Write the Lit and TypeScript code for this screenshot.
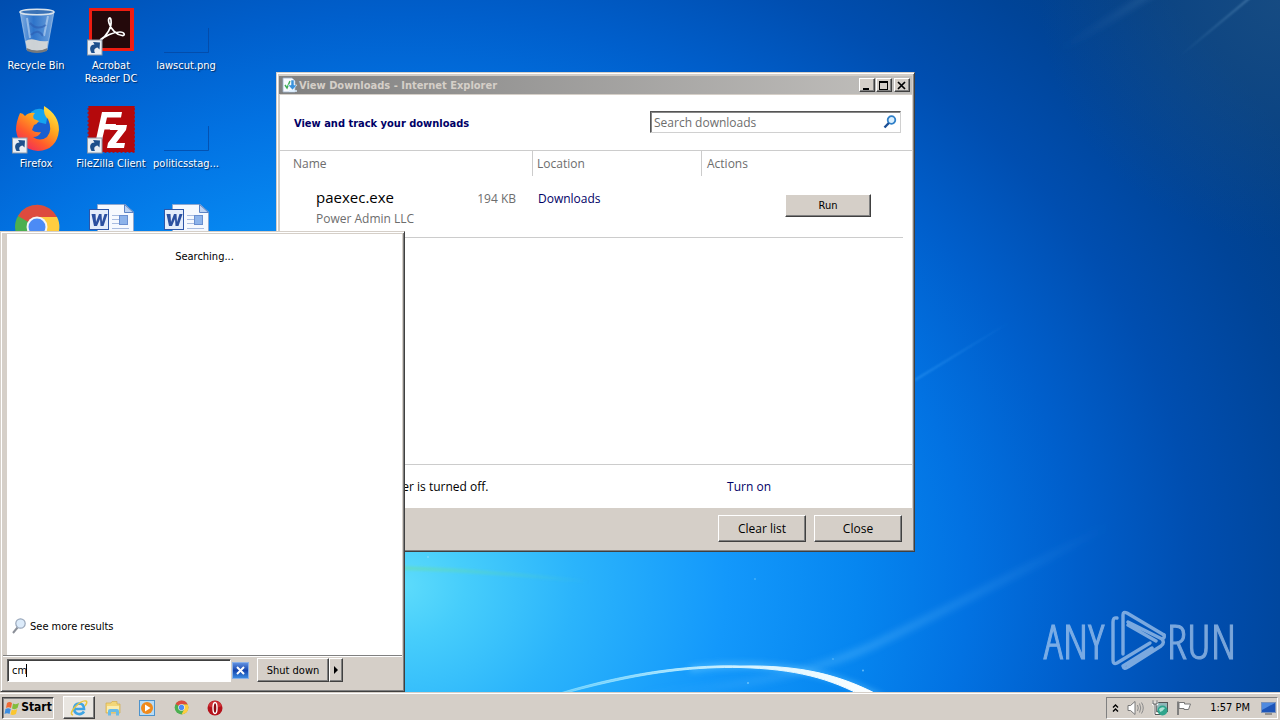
import { LitElement, html, css, svg } from "lit";
import { customElement, state } from "lit/decorators.js";

const shortcutArrow = svg`
  <g>
    <rect x="0.500" y="32" width="14.500" height="15" fill="#e9eef4" stroke="#8d9aab" stroke-width="1"/>
    <path d="M4.500 45 C1.500 39.500 4 36.500 7.500 36.500 L6 34 L13 34.500 L12.500 41.500 L10.500 39.500 C7.500 40 6.500 42 8 45 Z" fill="#1c4f8c"/>
  </g>`;

const wallpaper = html`
  <svg class="wallpaper" viewBox="0 0 1280 720" preserveAspectRatio="none" aria-hidden="true">
    <defs>
      <radialGradient id="sky" gradientUnits="userSpaceOnUse" cx="0" cy="0" r="1" gradientTransform="translate(400 585) scale(1090 920)">
        <stop offset="0" stop-color="#5edcfb"/>
        <stop offset="0.06" stop-color="#46cdfb"/>
        <stop offset="0.16" stop-color="#2bb4fb"/>
        <stop offset="0.3" stop-color="#1398fb"/>
        <stop offset="0.42" stop-color="#0686f0"/>
        <stop offset="0.52" stop-color="#0272e2"/>
        <stop offset="0.62" stop-color="#005fcc"/>
        <stop offset="0.73" stop-color="#004eb0"/>
        <stop offset="0.84" stop-color="#004498"/>
        <stop offset="0.95" stop-color="#023e84"/>
      </radialGradient>
      <radialGradient id="corner" gradientUnits="userSpaceOnUse" cx="1280" cy="0" r="240">
        <stop offset="0" stop-color="#2a5880" stop-opacity="0.5"/>
        <stop offset="1" stop-color="#2a5880" stop-opacity="0"/>
      </radialGradient>
      <linearGradient id="arc" x1="560" x2="880" y1="0" y2="0" gradientUnits="userSpaceOnUse">
        <stop offset="0" stop-color="#8fe2ff" stop-opacity="0.6"/>
        <stop offset="0.6" stop-color="#d8f4ff"/>
        <stop offset="1" stop-color="#ffffff"/>
      </linearGradient>
      <linearGradient id="ray" x1="640" x2="1110" y1="0" y2="0" gradientUnits="userSpaceOnUse">
        <stop offset="0" stop-color="#6cc4ff" stop-opacity="0"/>
        <stop offset="0.45" stop-color="#6cc4ff" stop-opacity="0.32"/>
        <stop offset="1" stop-color="#6cc4ff" stop-opacity="0"/>
      </linearGradient>
      <linearGradient id="glint" x1="915" x2="1010" y1="0" y2="0" gradientUnits="userSpaceOnUse">
        <stop offset="0" stop-color="#4cb0ff" stop-opacity="0.45"/>
        <stop offset="1" stop-color="#4cb0ff" stop-opacity="0"/>
      </linearGradient>
      <linearGradient id="streak" x1="1180" x2="1248" y1="0" y2="0" gradientUnits="userSpaceOnUse">
        <stop offset="0" stop-color="#6ea2cc" stop-opacity="0"/>
        <stop offset="1" stop-color="#6ea2cc" stop-opacity="0.6"/>
      </linearGradient>
      <linearGradient id="haze" x1="1060" x2="1170" y1="0" y2="0" gradientUnits="userSpaceOnUse">
        <stop offset="0" stop-color="#5a93c4" stop-opacity="0"/>
        <stop offset="1" stop-color="#5a93c4" stop-opacity="0.3"/>
      </linearGradient>
      <linearGradient id="green" x1="400" x2="590" y1="0" y2="0" gradientUnits="userSpaceOnUse">
        <stop offset="0" stop-color="#6ee08a" stop-opacity="0.4"/>
        <stop offset="1" stop-color="#6ee08a" stop-opacity="0"/>
      </linearGradient>
      <filter id="soft" filterUnits="userSpaceOnUse" x="0" y="-60" width="1280" height="840"><feGaussianBlur stdDeviation="3"/></filter>
      <filter id="fine" filterUnits="userSpaceOnUse" x="0" y="-60" width="1280" height="840"><feGaussianBlur stdDeviation="0.8"/></filter>
    </defs>
    <rect width="1280" height="720" fill="url(#sky)"/>
    <rect width="1280" height="720" fill="url(#corner)"/>
    <path d="M640 694 Q790 686 880 642 T1110 525" fill="none" stroke="url(#ray)" stroke-width="8" filter="url(#soft)"/>
    <path d="M915 380 L1010 322" stroke="url(#glint)" stroke-width="1.500" filter="url(#fine)"/>
    <path d="M1180 56 L1252 -4" stroke="url(#streak)" stroke-width="1.500" filter="url(#fine)"/>
    <path d="M1060 50 L1160 -12" stroke="url(#haze)" stroke-width="6" filter="url(#soft)"/>
    <path d="M400 568 Q480 570 590 582" fill="none" stroke="url(#green)" stroke-width="4" filter="url(#fine)"/>
    <path d="M690 669 Q800 655 882 698" fill="none" stroke="#7cd4ff" stroke-opacity="0.55" stroke-width="5" filter="url(#soft)"/>
    <path d="M560 693 C640 669 700 665 740 666 C800 665 840 674 884 698 L866 698 C830 678 795 669 740 667.500 C700 667 650 670 566 693 Z" fill="url(#arc)" stroke="url(#arc)" stroke-width="1"/>
    <g fill="#9fe0ff" fill-opacity="0.6"><circle cx="863" cy="670.500" r="1"/><circle cx="748" cy="683" r="1"/><circle cx="833" cy="659" r="0.8"/><circle cx="428" cy="557" r="0.9"/><circle cx="755" cy="579" r="0.8"/></g>
  </svg>`;

const recycleIcon = html`
  <svg class="glyph" viewBox="0 0 48 48" aria-hidden="true">
    <defs>
      <linearGradient id="binGlass" x1="0" x2="1"><stop offset="0" stop-color="#bcd8f6" stop-opacity="0.7"/><stop offset="0.4" stop-color="#5d96dc" stop-opacity="0.5"/><stop offset="1" stop-color="#c4dcf4" stop-opacity="0.6"/></linearGradient>
    </defs>
    <path d="M8 4 L42 4 L35 42 Q25 46 15 42 Z" fill="url(#binGlass)" stroke="#b4cfec" stroke-opacity="0.6"/>
    <path d="M13.500 33 Q18 30 24 32 T36 33 L35 41 Q25 45 15 41 Z" fill="#dedcd6" fill-opacity="0.9"/>
    <path d="M14.500 40 Q25 45 35.500 40 L35 43 Q25 47 15 43 Z" fill="#77797b"/>
    <path d="M15 10 L18 30 M36 8 L32 28" stroke="#e8f4ff" stroke-opacity="0.45" stroke-width="2" fill="none"/>
    <path d="M18 15 Q25 23 34 17 M19 27 Q26 20 31 28" stroke="#2c5cb0" stroke-opacity="0.6" stroke-width="2" fill="none"/>
    <ellipse cx="25" cy="4" rx="17" ry="2.800" fill="#3a72b6" stroke="#d9e3ec" stroke-width="1.600"/>
  </svg>`;

const acrobatIcon = html`
  <svg class="glyph" viewBox="0 0 48 48" aria-hidden="true">
    <rect x="2" y="0" width="45" height="43" fill="#ef1c11"/>
    <rect x="5" y="3" width="38" height="37" fill="#24090b"/>
    <path d="M13 32 C20 28 25 19 24 12 C23.500 8 20.500 10 22 15 C24 22 30 27 35 27.500 C38.500 28 38 24 33 24 C26 24 18 28 14 32" fill="none" stroke="#fff" stroke-width="1.700"/>
    ${shortcutArrow}
  </svg>`;

const firefoxIcon = html`
  <svg class="glyph" viewBox="0 0 48 48" aria-hidden="true">
    <defs>
      <linearGradient id="ffFox" x1="0.9" y1="0" x2="0.2" y2="1"><stop offset="0" stop-color="#fff24a"/><stop offset="0.4" stop-color="#ffa51f"/><stop offset="0.7" stop-color="#ff5b2c"/><stop offset="1" stop-color="#ef2464"/></linearGradient>
    </defs>
    <circle cx="27" cy="20" r="15" fill="#1a5fd0"/>
    <path d="M19 6 Q28 -1 36 7 L34 18 L21 15 Z" fill="#14a4f0"/>
    <path d="M8 7 Q11 7 13 10 Q17 6 23 7 Q20 10 22 13 L27 15 Q25 18 22 19 L20 24 Q23 27 29 26 Q27 31 21 31 Q28 36 35 31 Q41 24 36 13 Q31 9 32 0 Q47 9 47 24 Q45 44 26 45 Q6 43 4 24 Q4 16 8 7 Z" fill="url(#ffFox)"/>
    ${shortcutArrow}
  </svg>`;

const filezillaIcon = html`
  <svg class="glyph" viewBox="0 0 48 48" aria-hidden="true">
    <rect x="1.500" y="0" width="46" height="46" fill="#b4090c" stroke="#b4090c" stroke-opacity="0.8" stroke-width="2" stroke-dasharray="2 2"/>
    <path d="M15 6 H35 L34 11.500 H20 L18.500 18 H29 L28 23.500 H17.500 L14 38 H8 Z" fill="#fff"/>
    <path d="M24 19 H40 L39 24 L29 37 H38 L37 42 H20 L21 37 L31 24 H23 Z" fill="#fff"/>
    ${shortcutArrow}
  </svg>`;

const chromeShape = svg`
  <circle cx="24" cy="24" r="22" fill="#4caf50"/>
  <path d="M24 24 L5 13 A22 22 0 0 1 44 14 L24 14 Z" fill="#dd4b3e"/>
  <path d="M24 14 L44 14 A22 22 0 0 1 24 46 L33 29 Z" fill="#ffcd40"/>
  <circle cx="24" cy="24" r="10.500" fill="#f4f6f8"/>
  <circle cx="24" cy="24" r="8.500" fill="#4c8bf5"/>`;

const chromeIcon = html`<svg class="glyph" viewBox="-1 1 48 48" aria-hidden="true">${chromeShape}</svg>`;

const wordIcon = html`
  <svg class="glyph" viewBox="0 0 48 48" aria-hidden="true">
    <path d="M10.500 0.500 H38 L46.500 8 V48 H10.500 Z" fill="#f6f9fe" stroke="#8fa8cf"/>
    <path d="M37.500 0.500 V8.500 H46.500 Z" fill="#bcd2f2" stroke="#5d83c4"/>
    <path d="M25 11.500 H32 M25 15.500 H32 M25 19.500 H32 M25 24.500 H42 M12 27.500 H44" stroke="#a9bce0"/>
    <rect x="32.500" y="11.500" width="8" height="9" fill="#8db3ea" stroke="#6a8fd0"/>
    <rect x="2.500" y="5.500" width="19" height="20" fill="#e4edfb" stroke="#2d56a8"/>
    <path d="M4.500 10 H8.500 L9 18 L12 10 H14.500 L15 18 L17.500 10 H20.500 L16.500 22 H13.500 L13 15 L10 22 H7 Z" fill="#2b50a0"/>
  </svg>`;

const imageIcon = html`
  <svg class="glyph" viewBox="0 0 48 48" aria-hidden="true">
    <path d="M2 44.500 H46.500 V20" fill="none" stroke="#04449c" stroke-opacity="0.7"/>
  </svg>`;

const lensIcon = html`
  <svg class="lens" viewBox="0 0 14 14" aria-hidden="true">
    <circle cx="8.500" cy="5" r="3.800" fill="#d9efff" stroke="#2f7fc8" stroke-width="1.800"/>
    <path d="M5.800 8 L1.500 12.500" stroke="#1b4f95" stroke-width="2.400"/>
  </svg>`;

@customElement("app-root")
export class AppRoot extends LitElement {
  @state() private query = "cm";

  private shortcuts = [
    { name: "Recycle Bin", icon: recycleIcon },
    { name: "Firefox", icon: firefoxIcon },
    { name: "", icon: chromeIcon },
    { name: "Acrobat Reader DC", icon: acrobatIcon },
    { name: "FileZilla Client", icon: filezillaIcon },
    { name: "", icon: wordIcon },
    { name: "lawscut.png", icon: imageIcon },
    { name: "politicsstag...", icon: imageIcon },
    { name: "", icon: wordIcon },
  ];

  static styles = css`
    :host {
      display: grid;
      grid-template-rows: minmax(0, 1fr) auto;
      position: relative;
      isolation: isolate;
      height: 100vh;
      overflow: hidden;
      background: #0468d4;
      color: #000;
      font-family: "DejaVu Sans Condensed", "DejaVu Sans", sans-serif;
      font-size: 11px;
      line-height: 13px;
      --face: #d5cfc8;
      --navy: #000066;
    }
    * { box-sizing: border-box; }
    button, input { font: inherit; color: inherit; margin: 0; border-radius: 0; }
    button {
      display: inline-flex;
      align-items: center;
      justify-content: center;
      padding: 0;
      background: var(--face);
      border: 1px solid;
      border-color: #fff #404040 #404040 #fff;
      box-shadow: inset -1px -1px 0 #808080;
    }
    a { text-decoration: none; color: inherit; }
    svg { display: block; flex: none; }
    .wallpaper { position: absolute; inset: 0; width: 100%; height: 100%; z-index: -1; }
    .desktop { position: relative; }
    .shortcuts {
      display: grid;
      grid-auto-flow: column;
      grid-template-rows: repeat(3, 98px);
      grid-auto-columns: 72px;
      column-gap: 3px;
      padding-top: 8px;
      width: max-content;
    }
    .shortcut {
      display: flex;
      flex-direction: column;
      align-items: center;
      gap: 3px;
      color: #fff;
      text-align: center;
      text-shadow: 1px 1px 1px #012a60;
    }
    .glyph { width: 48px; height: 48px; }

    .window {
      position: absolute;
      left: 276px;
      top: 72px;
      width: 639px;
      height: 480px;
      display: flex;
      flex-direction: column;
      padding: 2px;
      background: var(--face);
      border: 1px solid;
      border-color: var(--face) #404040 #404040 var(--face);
      box-shadow: inset 1px 1px 0 #fff, inset -1px -1px 0 #808080;
    }
    .titlebar {
      display: flex;
      align-items: center;
      gap: 1px;
      height: 20px;
      padding: 0 2px 0 3px;
      border: 1px solid var(--face);
      border-width: 1px 0;
      background: linear-gradient(90deg, #808080, #c2c0bd);
      color: var(--face);
      font-weight: bold;
    }
    .titlebar h1 { flex: 1; margin: 0; font: inherit; }
    .caption { width: 16px; height: 14px; }
    .caption svg { width: 12px; height: 11px; }
    .caption.close { margin-left: 1px; }
    .content { flex: 1; display: flex; flex-direction: column; margin-left: 1px; background: #fff; font-family: "Open Sans", "Noto Sans", sans-serif; font-size: 12px; line-height: 16px; color: #6d6d6d; }
    .heading { display: flex; align-items: center; justify-content: space-between; height: 56px; padding: 0 11px 0 14px; border-bottom: 1px solid #ccc; }
    .heading h2 { margin: 0; padding-top: 2px; color: var(--navy); font: bold 11px/13px "DejaVu Sans Condensed", "DejaVu Sans", sans-serif; }
    .find { display: flex; align-items: center; width: 251px; height: 22px; margin-bottom: 2px; padding: 0 3px 0 2px; border: 1px solid; border-color: #555 #d0d0d0 #d0d0d0 #555; box-shadow: inset 1px 1px 0 #888; }
    .find input { flex: 1; min-width: 0; padding: 2px 1px 0; border: 0; outline: 0; background: none; }
    .find input::placeholder { color: #6d6d6d; opacity: 1; }
    .lens { width: 14px; height: 14px; }
    table { width: 100%; border-collapse: separate; border-spacing: 0; table-layout: fixed; }
    th { height: 25px; padding: 0 4px; text-align: left; font-weight: normal; border-right: 1px solid #ccc; }
    th:first-child { padding-left: 13px; width: 253px; }
    th:nth-child(2) { width: 169px; }
    th:last-child { border: 0; padding-left: 5px; }
    td { height: 61px; padding: 13px 5px 0; vertical-align: top; }
    td:first-child { padding: 11px 17px 0 36px; }
    .file { display: flex; justify-content: space-between; align-items: baseline; height: 24px; }
    .file strong { font-size: 15px; line-height: 20px; font-weight: normal; color: #000; }
    .link { color: var(--navy); }
    .place { display: block; line-height: 20px; }
    td.action { text-align: right; padding: 18px 41px 0; }
    .run { width: 86px; height: 23px; font-family: "DejaVu Sans Condensed", "DejaVu Sans", sans-serif; font-size: 11px; color: #000; }
    .rule { height: 1px; margin: 0 9px; background: #ccc; }
    .space { flex: 1; }
    .filter { display: flex; align-items: center; justify-content: space-between; height: 44px; padding: 0 141px 0 31px; border-top: 1px solid #ccc; color: #000; }
    .footer { display: flex; justify-content: flex-end; gap: 8px; padding: 7px 10px 7px; font-family: "Open Sans", "Noto Sans", sans-serif; font-size: 12px; }
    .footer button { width: 88px; height: 27px; }

    .startmenu {
      position: absolute;
      left: 0;
      bottom: 0;
      width: 405px;
      height: 461px;
      display: flex;
      flex-direction: column;
      padding: 2px;
      background: var(--face);
      border: 1px solid;
      border-color: var(--face) #404040 #404040 var(--face);
      box-shadow: inset 1px 1px 0 #fff, inset -1px -1px 0 #808080;
    }
    .results { flex: 1; display: flex; flex-direction: column; justify-content: space-between; margin-left: 4px; padding: 16px 5px 21px; background: #fff; }
    .status { margin: 0; text-align: center; }
    .more { display: flex; align-items: center; gap: 4px; }
    .more svg { width: 14px; height: 16px; }
    .searchbar { display: flex; align-items: center; height: 34px; padding: 0 4px 5px; border-top: 1px solid #808080; box-shadow: inset 0 1px 0 #fff; }
    .entry { position: relative; display: flex; }
    .entry input { width: 224px; height: 23px; padding: 0 4px; background: #fff; border: 1px solid; border-color: #606060 #fff #fff #606060; box-shadow: inset 1px 1px 0 #404040; outline: 0; caret-color: transparent; }
    .caret { position: absolute; left: 5px; top: 5px; height: 13px; border-right: 1px solid #000; pointer-events: none; width: 15px; }
    .clear { width: 17px; height: 17px; margin: 0 8px 0 1px; border: 1px solid #8ab0e8; background: linear-gradient(#5f8fe0, #1544ac 50%, #3c8ae0); box-shadow: none; }
    .shutdown { width: 72px; height: 24px; }
    .options { width: 14px; height: 24px; }

    .taskbar { display: flex; align-items: center; height: 28px; padding: 2px 2px 0; background: var(--face); border-top: 1px solid var(--face); box-shadow: inset 0 1px 0 #fff; }
    .start { width: 52px; height: 22px; gap: 1px; font-weight: bold; font-size: 12px; border-color: #404040 #fff #fff #404040; box-shadow: inset 1px 1px 0 #808080; }
    .tasks { display: flex; flex: 1; align-items: center; margin-left: 9px; gap: 2px; }
    .tasks button { width: 32px; height: 23px; border-color: transparent; box-shadow: none; background: none; }
    .tasks button.active { background: #e9e6e1; border-color: #fff #404040 #404040 #fff; box-shadow: inset -1px -1px 0 #808080; }
    .tray { display: flex; align-items: center; gap: 8px; height: 22px; padding: 0 1px 0 5px; border: 1px solid; border-color: #808080 #fff #fff #808080; }
    .clock { padding: 0 3px 0 10px; }
    .tray button { border: 0; box-shadow: none; background: none; }

    .brand { position: absolute; right: 47px; bottom: 20px; display: grid; grid-template-columns: 66px 55px 63px; justify-items: center; align-items: center; gap: 4px; color: #b9d4f2; opacity: 0.66; font: 300 48px/60px "Open Sans Condensed Light", "Open Sans Condensed", "Roboto Condensed", sans-serif; -webkit-text-stroke: 1px currentColor; }
    .brand svg { width: 55px; height: 62px; }
  `;

  private onInput(e: Event) {
    this.query = (e.target as HTMLInputElement).value;
  }

  render() {
    return html`
      ${wallpaper}
      <main class="desktop">
        <nav class="shortcuts" aria-label="Desktop">
          ${this.shortcuts.map((s) => html`<a class="shortcut" href="#">${s.icon}${s.name ? html`<span>${s.name}</span>` : ""}</a>`)}
        </nav>

        <div class="brand" aria-hidden="true">
          <span>ANY</span>
          <svg viewBox="0 0 55 62" fill="none" stroke="currentColor" stroke-width="3.400" stroke-linejoin="round" stroke-linecap="round">
            <path d="M6 8 Q2 7 2 12 V50 Q2 55 6 53 L39 33"/>
            <path d="M12 44 V5 Q12 1 16 3 L53 25"/>
            <path d="M17 15 L45 31 M53 25 Q54 28 51 29 L17 12"/>
            <path d="M51 29 Q54 33 50 36 L17 57 Q13 60 12 56 L41 38"/>
          </svg>
          <span>RUN</span>
        </div>

        <section class="window" aria-label="View Downloads">
          <header class="titlebar">
            <svg width="16" height="16" viewBox="0 0 16 16" aria-hidden="true">
              <path d="M1 1 H10 L13 4 V15 H1 Z" fill="#f8fbff" stroke="#a0b4cc" stroke-width="0.8"/>
              <path d="M3 8 L5 11 L8 4" fill="none" stroke="#3fae55" stroke-width="1.500"/>
              <path d="M9 3 H12 V8 H15 L10.500 13 L6 8 H9 Z" fill="#3b92dc" stroke="#fff" stroke-width="0.500"/>
              <path d="M7 14 H15" stroke="#dcefff" stroke-width="1.500"/>
            </svg>
            <h1>View Downloads - Internet Explorer</h1>
            <button class="caption" aria-label="Minimize"><svg viewBox="0 0 12 11"><path d="M2 8 H8 V10 H2 Z"/></svg></button>
            <button class="caption" aria-label="Maximize"><svg viewBox="0 0 12 11"><path d="M1 1 H10 V10 H1 Z M2 3 V9 H9 V3 Z" fill-rule="evenodd"/></svg></button>
            <button class="caption close" aria-label="Close window"><svg viewBox="0 0 12 11"><path d="M2 2 L9 9 M9 2 L2 9" stroke="#000" stroke-width="1.700"/></svg></button>
          </header>
          <div class="content">
            <div class="heading">
              <h2>View and track your downloads</h2>
              <label class="find"><input type="text" placeholder="Search downloads" aria-label="Search downloads" />${lensIcon}</label>
            </div>
            <table>
              <thead><tr><th scope="col">Name</th><th scope="col">Location</th><th scope="col">Actions</th></tr></thead>
              <tbody>
                <tr>
                  <td><div class="file"><strong>paexec.exe</strong><span>194 KB</span></div><div>Power Admin LLC</div></td>
                  <td><a class="link place" href="#">Downloads</a></td>
                  <td class="action"><button class="run">Run</button></td>
                </tr>
              </tbody>
            </table>
            <div class="rule"></div>
            <div class="space"></div>
            <div class="filter"><span>SmartScreen Filter is turned off.</span><a class="link" href="#">Turn on</a></div>
          </div>
          <footer class="footer"><button>Clear list</button><button>Close</button></footer>
        </section>

        <section class="startmenu" aria-label="Start menu">
          <div class="results">
            <p class="status">Searching...</p>
            <a class="more" href="#">
              <svg viewBox="0 0 14 16" aria-hidden="true"><path d="M5.500 9.500 L1 15" stroke="#8b8f98" stroke-width="2"/><circle cx="8.500" cy="5.500" r="4.700" fill="#dcebfa" stroke="#9aa8bb" stroke-width="1.200"/></svg>
              See more results
            </a>
          </div>
          <div class="searchbar">
            <div class="entry">
              <input type="text" aria-label="Search programs and files" .value=${this.query} @input=${this.onInput} />
              ${this.query === "cm" ? html`<i class="caret"></i>` : ""}
            </div>
            <button class="clear" aria-label="Clear search"><svg width="11" height="11" viewBox="0 0 11 11"><path d="M2 2 L9 9 M9 2 L2 9" stroke="#fff" stroke-width="2"/></svg></button>
            <button class="shutdown">Shut down</button>
            <button class="options" aria-label="Shut down options"><svg width="6" height="8" viewBox="0 0 6 8"><path d="M1 0 L5 4 L1 8 Z"/></svg></button>
          </div>
        </section>
      </main>

      <footer class="taskbar">
        <button class="start">
          <svg width="16" height="16" viewBox="0 0 16 16" aria-hidden="true">
            <path d="M3 3 Q5.500 1 8 3 L7 8 Q4.500 6.500 2 8 Z" fill="#ef6a35"/>
            <path d="M9 3.500 Q12 5 15 3 L13.500 8 Q11 10 8 8.500 Z" fill="#83bd3c"/>
            <path d="M1.500 9 Q4 7.500 6.800 9 L5.500 14 Q3 12.500 0.500 14 Z" fill="#3d8ee0"/>
            <path d="M7.800 9.500 Q10 11 13.200 9 L12 14 Q9 15.500 6.500 14.500 Z" fill="#fbc62e"/>
          </svg>Start
        </button>
        <nav class="tasks" aria-label="Programs">
          <button class="active" aria-label="Internet Explorer">
            <svg width="18" height="18" viewBox="0 0 18 18"><path d="M14 12.500 Q12 15.500 8.500 15 Q4 14 4 9.500 Q4.500 5 9 4.500 Q14 4.500 14 10 H5" fill="none" stroke="#3fa5e4" stroke-width="2.600"/><path d="M3 16 Q-1 15 5 8 Q12 1 16 2 Q18 3 15 7" fill="none" stroke="#e8c53c" stroke-width="1.500"/></svg>
          </button>
          <button aria-label="File Explorer">
            <svg width="16" height="16" viewBox="0 0 16 16"><path d="M1 3 H6 L7 1.500 H12 V4 H15 V13 H1 Z" fill="#f3d678" stroke="#d4ae4a" stroke-width="0.700"/><path d="M2 6 H14 V12 H2 Z" fill="#fbedb0"/><path d="M3 15.500 V11 Q3 9 5 9 H12 Q14 9 14 11 V15.500 H11 V12 H6 V15.500 Z" fill="#69bce8"/></svg>
          </button>
          <button aria-label="Media Player">
            <svg width="16" height="16" viewBox="0 0 16 16"><rect x="0.500" y="0.500" width="15" height="15" fill="#b8dcf6" stroke="#4d93cc"/><circle cx="8" cy="8" r="6" fill="#f08a1c"/><path d="M6 4.500 L11.500 8 L6 11.500 Z" fill="#fff"/></svg>
          </button>
          <button aria-label="Chrome"><svg width="15" height="15" viewBox="0 0 48 48">${chromeShape}</svg></button>
          <button aria-label="Opera">
            <svg width="16" height="16" viewBox="0 0 16 16"><circle cx="8" cy="8" r="7.500" fill="#b5121b"/><path d="M1 6 A7.500 7.500 0 0 1 15 6 Q8 9 1 6Z" fill="#e0474a" fill-opacity="0.6"/><ellipse cx="8" cy="8" rx="2" ry="5.500" fill="#8c0b12" stroke="#fff" stroke-width="1.400"/></svg>
          </button>
        </nav>
        <div class="tray">
          <button aria-label="Show hidden icons"><svg width="7" height="10" viewBox="0 0 7 10"><path d="M1 4.500 L3.500 2 L6 4.500 M1 8.500 L3.500 6 L6 8.500" fill="none" stroke="#000" stroke-width="1.400"/></svg></button>
          <svg width="17" height="16" viewBox="0 0 17 16" role="img" aria-label="Volume"><path d="M1 5.500 H3.500 L8 1.500 V14.500 L3.500 10.500 H1 Z" fill="#fff" stroke="#777"/><path d="M10.500 5 Q12 8 10.500 11 M12.500 3.500 Q15 8 12.500 12.500 M14.500 2.500 Q18 8 14.500 13.500" fill="none" stroke="#8a8a8a"/></svg>
          <svg width="16" height="16" viewBox="0 0 16 16" role="img" aria-label="Network"><rect x="4.500" y="2.500" width="11" height="9" fill="#8fb6b8" stroke="#555"/><path d="M1 1 V4 H5 V1 M3 4 V14 H9" fill="none" stroke="#fff" stroke-width="2.400"/><path d="M1 0.500 V4 H5 V0.500 M3 4 V14.500 H9" fill="none" stroke="#555"/><circle cx="10.500" cy="10.500" r="5" fill="#2fa58c"/><path d="M7 9 Q10 6 13 8 Q11 11 8 12" fill="#a9e0d4"/></svg>
          <svg width="16" height="16" viewBox="0 0 16 16" role="img" aria-label="Action Center"><path d="M2 1.500 V15" stroke="#777" stroke-width="1.800"/><path d="M3 2.500 H8.500 V4 H14.500 L12.500 9.500 H8 V8.500 H3 Z" fill="#fff" stroke="#777"/></svg>
          <span class="clock">1:57 PM</span>
          <button aria-label="Show desktop"><svg width="15" height="14" viewBox="0 0 15 14"><rect x="0.500" y="1.500" width="14" height="10" fill="#1d55b8" stroke="#7b93bb"/><path d="M1 2 H14 L1 9 Z" fill="#4f8ae0"/><path d="M4 13 H11" stroke="#555"/></svg></button>
        </div>
      </footer>
    `;
  }
}
